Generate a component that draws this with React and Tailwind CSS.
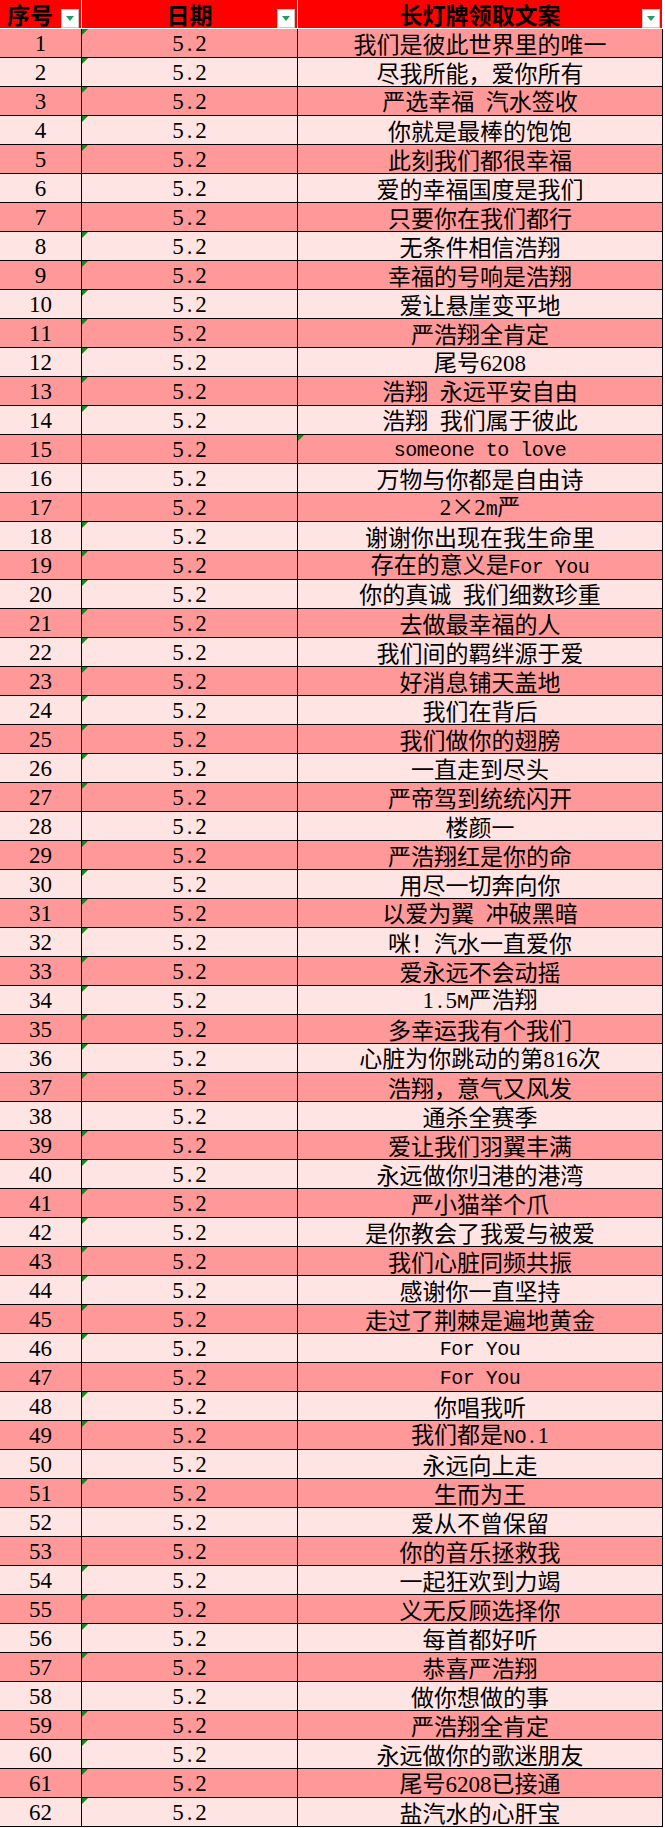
const rows = [
  '我们是彼此世界里的唯一',
  '尽我所能，爱你所有',
  '严选幸福 汽水签收',
  '你就是最棒的饱饱',
  '此刻我们都很幸福',
  '爱的幸福国度是我们',
  '只要你在我们都行',
  '无条件相信浩翔',
  '幸福的号响是浩翔',
  '爱让悬崖变平地',
  '严浩翔全肯定',
  '尾号6208',
  '浩翔 永远平安自由',
  '浩翔 我们属于彼此',
  'someone to love',
  '万物与你都是自由诗',
  '2×2m严',
  '谢谢你出现在我生命里',
  '存在的意义是For You',
  '你的真诚 我们细数珍重',
  '去做最幸福的人',
  '我们间的羁绊源于爱',
  '好消息铺天盖地',
  '我们在背后',
  '我们做你的翅膀',
  '一直走到尽头',
  '严帝驾到统统闪开',
  '楼颜一',
  '严浩翔红是你的命',
  '用尽一切奔向你',
  '以爱为翼 冲破黑暗',
  '咪！汽水一直爱你',
  '爱永远不会动摇',
  '1.5M严浩翔',
  '多幸运我有个我们',
  '心脏为你跳动的第816次',
  '浩翔，意气又风发',
  '通杀全赛季',
  '爱让我们羽翼丰满',
  '永远做你归港的港湾',
  '严小猫举个爪',
  '是你教会了我爱与被爱',
  '我们心脏同频共振',
  '感谢你一直坚持',
  '走过了荆棘是遍地黄金',
  'For You',
  'For You',
  '你唱我听',
  '我们都是NO.1',
  '永远向上走',
  '生而为王',
  '爱从不曾保留',
  '你的音乐拯救我',
  '一起狂欢到力竭',
  '义无反顾选择你',
  '每首都好听',
  '恭喜严浩翔',
  '做你想做的事',
  '严浩翔全肯定',
  '永远做你的歌迷朋友',
  '尾号6208已接通',
  '盐汽水的心肝宝',
];

// rows whose date cell shows no green marker
const noMark = [6, 7, 15, 16, 17, 28, 38, 47, 50, 52, 53, 58];

// half-width cell, like the sheet's monospaced latin glyphs
function Half({ ch }) {
  if (/[0-9. ]/.test(ch)) {
    return (
      <span className="inline-block w-[11.5px] text-center font-['Liberation_Serif',serif] text-[23px] leading-none">
        {ch === ' ' ? '\u00a0' : ch}
      </span>
    );
  }
  return (
    <span className="inline-block w-[11.5px] text-center font-['Liberation_Mono',monospace] text-[20px] leading-none">
      {ch}
    </span>
  );
}

function Mixed({ text }) {
  const parts = text.split(/([\x00-\x7f]+)/).filter(Boolean);
  return (
    <span className="whitespace-pre">
      {parts.map((p, i) =>
        /^[\x00-\x7f]+$/.test(p) ? (
          p.split('').map((ch, j) => <Half key={i + '-' + j} ch={ch} />)
        ) : (
          <span key={i} className="inline-block font-['Noto_Sans_CJK_SC',sans-serif] text-[23px] leading-none">
            {p}
          </span>
        )
      )}
    </span>
  );
}

function Mark() {
  return (
    <span className="absolute left-0 top-0 w-0 h-0 border-t-[6px] border-t-[#138a13] border-r-[6px] border-r-transparent" />
  );
}

function FilterButton() {
  return (
    <span className="absolute right-[2px] bottom-0 w-[18px] h-[19px] bg-white border border-[#c8c8c8] flex items-center justify-center">
      <span className="w-0 h-0 border-l-[4px] border-l-transparent border-r-[4px] border-r-transparent border-t-[5px] border-t-[#1f9e64]" />
    </span>
  );
}

export default function App() {
  return (
    <div className="w-[665px] min-h-[1828px] bg-white text-black leading-none">
      <div className="w-[663px]">
        <div className="flex h-[29px] border-b border-white font-['Noto_Sans_CJK_SC',sans-serif] font-bold text-[23px]">
          <div className="relative w-[82px] bg-[#ff0000] border-r border-white flex items-center pl-[7px]">
            <span className="inline-block leading-none">序号</span>
            <FilterButton />
          </div>
          <div className="relative w-[216px] bg-[#ff0000] border-r border-white flex items-center justify-center">
            <span className="inline-block leading-none">日期</span>
            <FilterButton />
          </div>
          <div className="relative w-[365px] bg-[#ff0000] border-r border-white flex items-center justify-center">
            <span className="inline-block leading-none">长灯牌领取文案</span>
            <FilterButton />
          </div>
        </div>

        {rows.map((text, i) => {
          const n = i + 1;
          const bg = n % 2 === 1 ? 'bg-[#ff9999]' : 'bg-[#ffe4e4]';
          return (
            <div key={n} className={`flex h-[29px] border-b border-black ${bg}`}>
              <div className="w-[82px] border-r border-black flex items-center justify-center">
                <Mixed text={String(n)} />
              </div>
              <div className="relative w-[216px] border-r border-black flex items-center justify-center">
                {!noMark.includes(n) && <Mark />}
                <Mixed text="5.2" />
              </div>
              <div className="relative w-[365px] border-r border-black flex items-center justify-center">
                {n === 15 && <Mark />}
                <Mixed text={text} />
              </div>
            </div>
          );
        })}
      </div>
    </div>
  );
}
